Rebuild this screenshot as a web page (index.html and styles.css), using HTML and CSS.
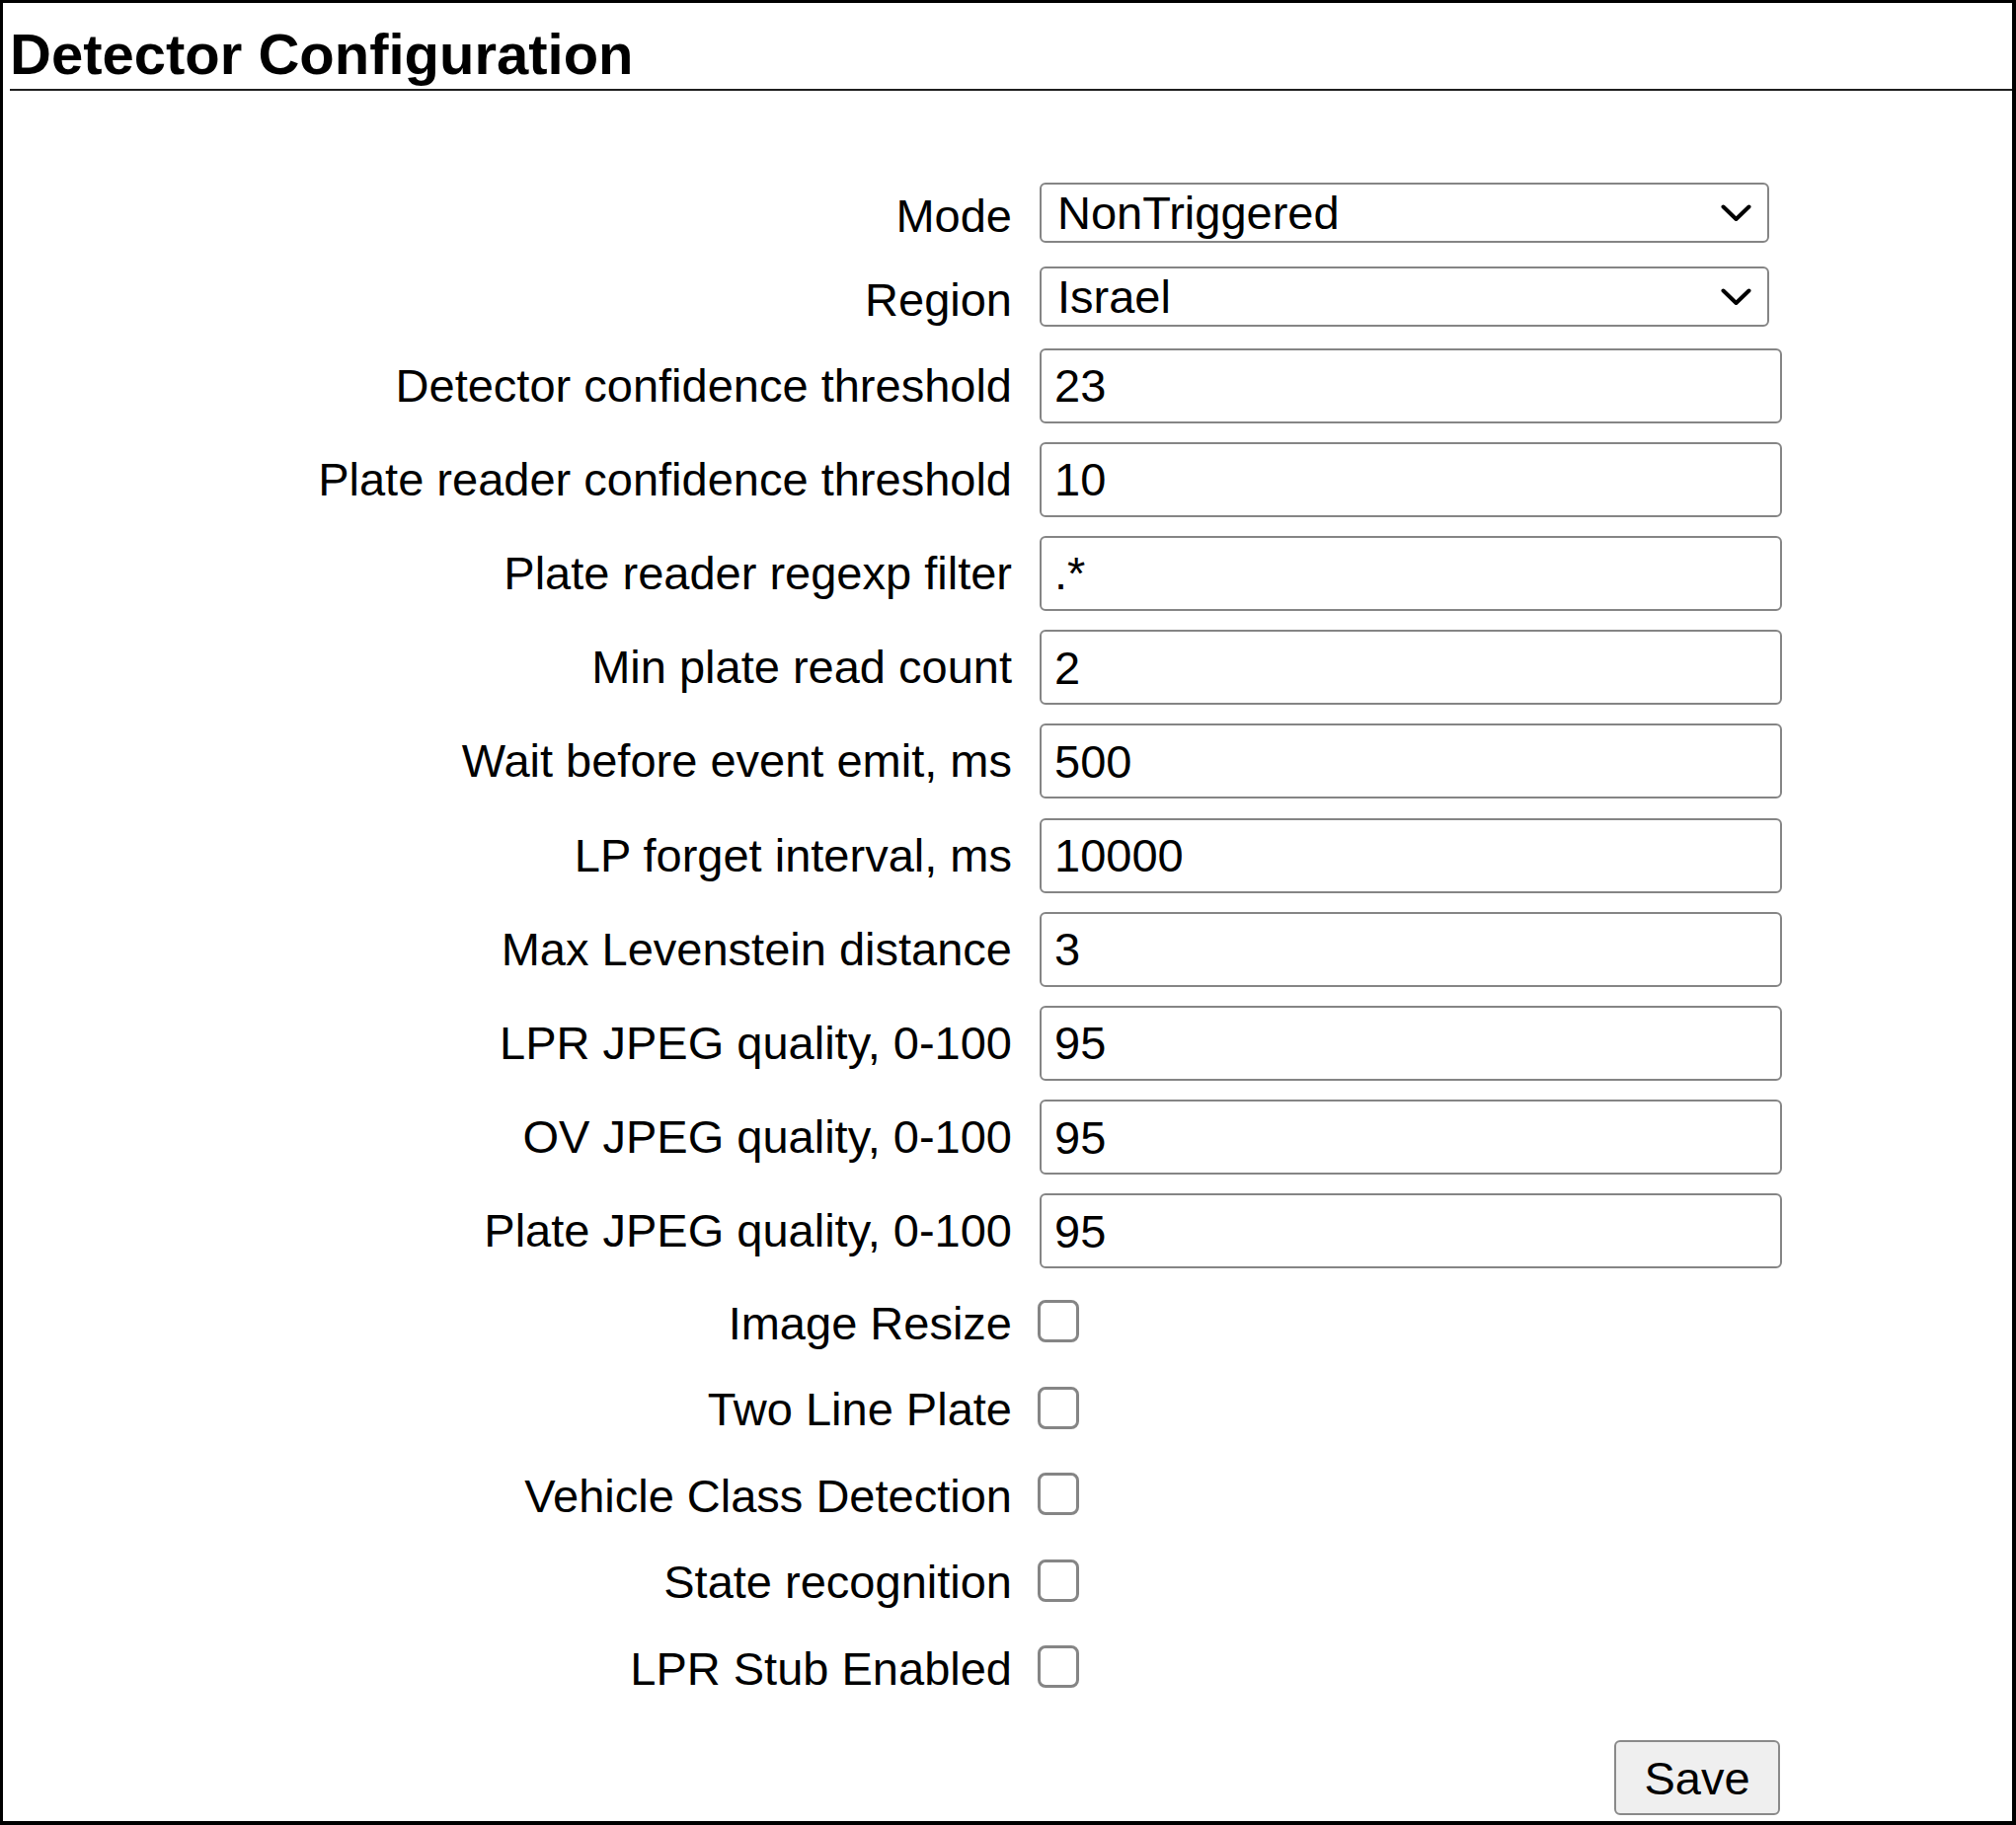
FILE: index.html
```html
<!DOCTYPE html>
<html lang="en">
<head>
<meta charset="utf-8">
<title>Detector Configuration</title>
<link rel="stylesheet" href="styles.css">
</head>
<body>
<div class="frame">
  <h2 class="title">Detector Configuration</h2>
  <form class="form">
    <div class="row row-select">
      <label class="lbl">Mode</label>
      <div class="ctl">
        <div class="select-wrap">
          <select class="select"><option>NonTriggered</option></select>
          <svg class="chev" viewBox="0 0 31 18" aria-hidden="true"><path d="M2.5 2.5 L15.5 15 L28.5 2.5" fill="none" stroke="#000" stroke-width="4" stroke-linecap="round" stroke-linejoin="round"/></svg>
        </div>
      </div>
    </div>
    <div class="row row-select">
      <label class="lbl">Region</label>
      <div class="ctl">
        <div class="select-wrap">
          <select class="select"><option>Israel</option></select>
          <svg class="chev" viewBox="0 0 31 18" aria-hidden="true"><path d="M2.5 2.5 L15.5 15 L28.5 2.5" fill="none" stroke="#000" stroke-width="4" stroke-linecap="round" stroke-linejoin="round"/></svg>
        </div>
      </div>
    </div>
    <div class="row row-input"><label class="lbl">Detector confidence threshold</label><div class="ctl"><input class="field" type="text" value="23"></div></div>
    <div class="row row-input"><label class="lbl">Plate reader confidence threshold</label><div class="ctl"><input class="field" type="text" value="10"></div></div>
    <div class="row row-input"><label class="lbl">Plate reader regexp filter</label><div class="ctl"><input class="field" type="text" value=".*"></div></div>
    <div class="row row-input"><label class="lbl">Min plate read count</label><div class="ctl"><input class="field" type="text" value="2"></div></div>
    <div class="row row-input"><label class="lbl">Wait before event emit, ms</label><div class="ctl"><input class="field" type="text" value="500"></div></div>
    <div class="row row-input"><label class="lbl">LP forget interval, ms</label><div class="ctl"><input class="field" type="text" value="10000"></div></div>
    <div class="row row-input"><label class="lbl">Max Levenstein distance</label><div class="ctl"><input class="field" type="text" value="3"></div></div>
    <div class="row row-input"><label class="lbl">LPR JPEG quality, 0-100</label><div class="ctl"><input class="field" type="text" value="95"></div></div>
    <div class="row row-input"><label class="lbl">OV JPEG quality, 0-100</label><div class="ctl"><input class="field" type="text" value="95"></div></div>
    <div class="row row-input"><label class="lbl">Plate JPEG quality, 0-100</label><div class="ctl"><input class="field" type="text" value="95"></div></div>
    <div class="row row-check"><label class="lbl">Image Resize</label><div class="ctl"><input class="check" type="checkbox"></div></div>
    <div class="row row-check"><label class="lbl">Two Line Plate</label><div class="ctl"><input class="check" type="checkbox"></div></div>
    <div class="row row-check"><label class="lbl">Vehicle Class Detection</label><div class="ctl"><input class="check" type="checkbox"></div></div>
    <div class="row row-check"><label class="lbl">State recognition</label><div class="ctl"><input class="check" type="checkbox"></div></div>
    <div class="row row-check"><label class="lbl">LPR Stub Enabled</label><div class="ctl"><input class="check" type="checkbox"></div></div>
    <div class="row row-save"><span class="lbl"></span><div class="ctl ctl-save"><button class="save" type="button">Save</button></div></div>
  </form>
</div>
</body>
</html>
```

FILE: styles.css
```css
html, body {
  margin: 0;
  padding: 0;
  background: #fff;
}

body {
  font-family: "Liberation Sans", Arial, sans-serif;
  color: #000;
}

.frame {
  box-sizing: border-box;
  width: 2042px;
  height: 1849px;
  border-style: solid;
  border-color: #000;
  border-width: 3px 4px 4px 3px;
  padding: 0 0 0 7px;
  display: flex;
  flex-direction: column;
}

.title {
  margin: 0;
  font-size: 58px;
  font-weight: bold;
  line-height: 66px;
  padding: 19px 0 2px 0;
  border-bottom: 2px solid #1f1f1f;
}

.form {
  display: flex;
  flex-direction: column;
  margin-top: 81px;
}

.row {
  display: grid;
  grid-template-columns: 1015px 752px;
  column-gap: 28px;
  align-items: center;
}

.row-select { height: 85px; }
.row-input { height: 95.2px; }
.row-check { height: 87.5px; }
.row-save { margin-top: 31px; }

.lbl {
  text-align: right;
  font-size: 47px;
  line-height: 54px;
  white-space: nowrap;
}

.row-select .lbl {
  padding-top: 7px;
}

.row-check .lbl {
  padding-top: 4px;
}

.ctl {
  display: flex;
  align-items: center;
}

.ctl-save {
  justify-content: flex-end;
  padding-right: 2px;
}

.select-wrap {
  position: relative;
  width: 739px;
  height: 61px;
}

.select {
  -webkit-appearance: none;
  appearance: none;
  box-sizing: border-box;
  width: 739px;
  height: 61px;
  margin: 0;
  padding: 0 0 0 16px;
  border: 2px solid #858585;
  border-radius: 6px;
  background: #fff;
  color: #000;
  font-family: "Liberation Sans", Arial, sans-serif;
  font-size: 47px;
  line-height: 57px;
}

.chev {
  position: absolute;
  right: 18px;
  top: 22px;
  width: 31px;
  height: 18px;
  pointer-events: none;
}

.field {
  box-sizing: border-box;
  width: 752px;
  height: 76px;
  margin: 0;
  padding: 0 13px;
  border: 2px solid #858585;
  border-radius: 6px;
  background: #fff;
  color: #000;
  font-family: "Liberation Sans", Arial, sans-serif;
  font-size: 47px;
}

.check {
  -webkit-appearance: none;
  appearance: none;
  box-sizing: border-box;
  width: 42px;
  height: 43px;
  margin: 0 0 0 -2px;
  border: 3px solid #858585;
  border-radius: 8px;
  background: #fff;
}

.save {
  box-sizing: border-box;
  width: 168px;
  height: 76px;
  margin: 0;
  padding: 0;
  border: 2px solid #8a8a8a;
  border-radius: 6px;
  background: #efefef;
  color: #000;
  font-family: "Liberation Sans", Arial, sans-serif;
  font-size: 47px;
}
```
